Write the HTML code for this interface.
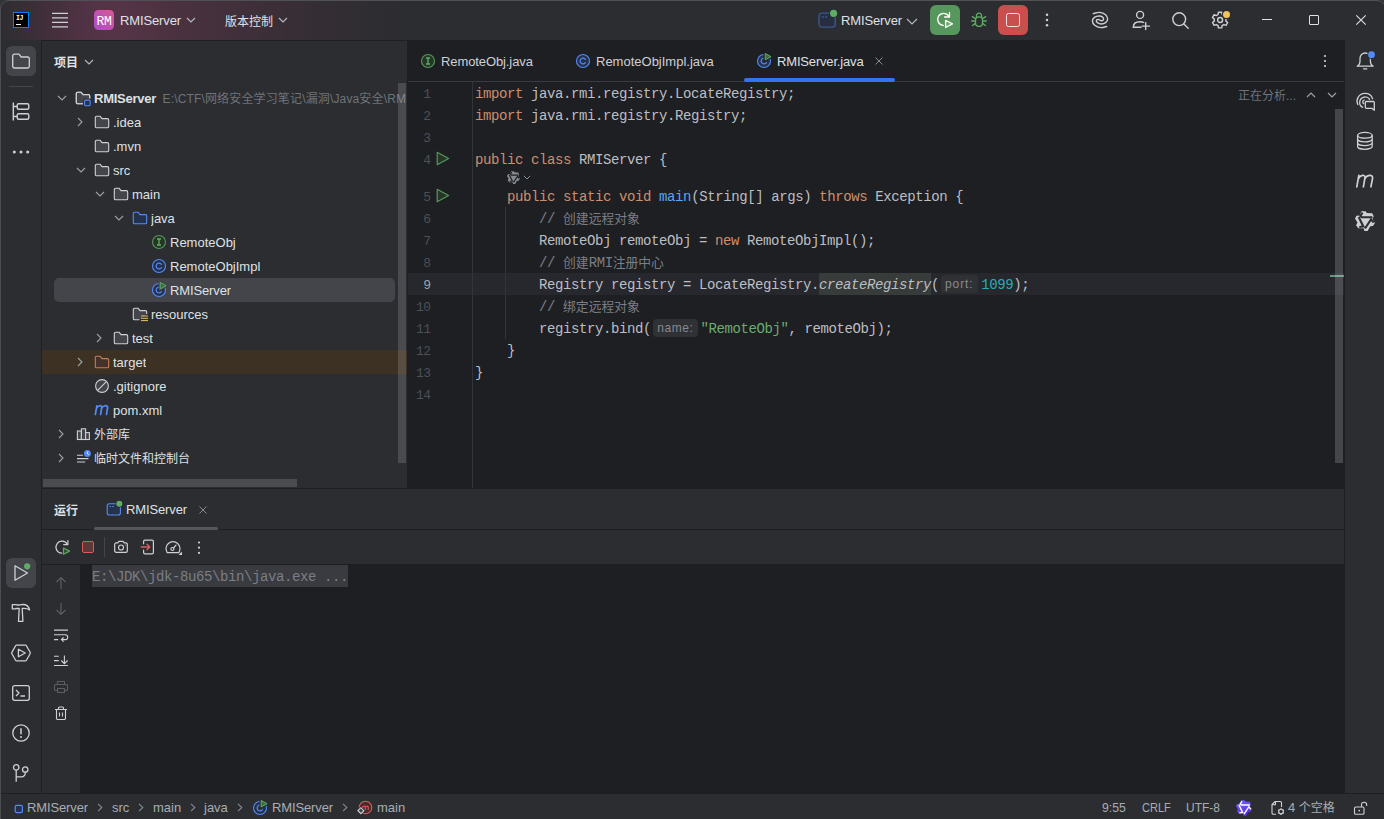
<!DOCTYPE html>
<html lang="zh-CN">
<head>
<meta charset="utf-8">
<title>RMIServer</title>
<style>
*{box-sizing:border-box;margin:0;padding:0}
html,body{width:1384px;height:819px;overflow:hidden;background:#2b2d30}
body{position:relative;font-family:"Liberation Sans","Noto Sans CJK SC",sans-serif;font-size:13px;color:#dfe1e5;-webkit-font-smoothing:antialiased}
.abs{position:absolute}
svg{position:absolute;overflow:visible}
.t{position:absolute;white-space:nowrap;line-height:20px;height:20px;margin-top:1px}
/* title bar */
#title{left:0;top:0;width:1384px;height:40px;background:#2b2d30}
#titleglow{left:0;top:0;width:460px;height:40px;background:linear-gradient(90deg,#2e2d32 0px,#3a2e37 30px,#47303e 60px,#523346 90px,#563447 110px,#523345 140px,#4a313f 180px,#44303c 220px,#3a2e37 280px,#322d33 340px,#2c2d31 400px,#2b2d30 460px)}
/* panels */
#lstrip{left:0;top:40px;width:42px;height:754px;background:#2b2d30;border-right:1px solid #1e1f22}
#rstrip{left:1344px;top:40px;width:40px;height:754px;background:#2b2d30;border-left:1px solid #1e1f22}
#proj{left:42px;top:41px;width:365px;height:447px;background:#2b2d30}
#editor{left:408px;top:41px;width:936px;height:447px;background:#1e1f22}
#hsplit{left:42px;top:488px;width:1302px;height:1px;background:#1e1f22}
#vsplit{left:407px;top:41px;width:1px;height:447px;background:#1e1f22}
#topline{left:0;top:40px;width:1384px;height:1px;background:#1e1f22}
#run{left:42px;top:489px;width:1302px;height:305px;background:#2b2d30}
#console{left:80px;top:565px;width:1264px;height:229px;background:#1e1f22}
#status{left:0;top:793px;width:1384px;height:26px;background:#2b2d30;border-top:1px solid #1e1f22}
.row{position:absolute;left:42px;width:365px;height:24px}
.tree{font-size:13px;color:#dfe1e5}
.code{position:absolute;white-space:pre;font-family:"Liberation Mono","Noto Sans CJK SC",monospace;font-size:14px;letter-spacing:-0.401px;line-height:22px;height:22px;color:#bcbec4;left:475px;margin-top:1px}
.ln{position:absolute;white-space:pre;font-family:"Liberation Mono",monospace;font-size:13px;letter-spacing:-0.600px;margin-top:2px;line-height:22px;height:22px;color:#4b5059;width:30px;text-align:right;left:400.500px}
.k{color:#cf8e6d}.s{color:#6aab73}.n{color:#2aacb8}.m{color:#56a8f5}.c{color:#7a7e85}
.cj{font-size:12.800px;letter-spacing:0}
.hint{display:inline-block;text-align:center;padding:0;font-family:"Liberation Sans",sans-serif;font-size:12px;color:#868a91;background:#2f3135;border-radius:4px;height:18px;line-height:18px;vertical-align:middle;position:relative;top:-1.500px;letter-spacing:0.600px}
</style>
</head>
<body>
<div id="title" class="abs"></div>
<div id="titleglow" class="abs"></div>
<div id="topline" class="abs"></div>
<div id="lstrip" class="abs"></div>
<div id="rstrip" class="abs"></div>
<div id="proj" class="abs"></div>
<div id="editor" class="abs"></div>
<div id="vsplit" class="abs"></div>
<div id="hsplit" class="abs"></div>
<div id="run" class="abs"></div>
<div id="console" class="abs"></div>
<div id="status" class="abs"></div>


<!-- title bar left -->
<div class="abs" style="left:13px;top:12px;width:16px;height:16px;background:#000;border:1px solid #0a7cf5"></div>
<div class="t" style="left:16px;top:14px;font-family:'Liberation Mono',monospace;font-weight:bold;font-size:6.5px;line-height:8px;height:8px;color:#fff;letter-spacing:-0.3px">IJ</div>
<div class="abs" style="left:16px;top:23.5px;width:5px;height:1.2px;background:#fff"></div>
<svg style="left:52px;top:12px" width="16" height="16" viewBox="0 0 16 16"><path d="M0 1.3H16M0 5.8H16M0 10.3H16M0 14.8H16" stroke="#ced0d6" stroke-width="1.3" fill="none"/></svg>
<div class="abs" style="left:94px;top:10px;width:20px;height:20px;border-radius:4.5px;background:linear-gradient(45deg,#a94fc9 0%,#c450b0 50%,#dc5895 100%)"></div>
<div class="t" style="left:94px;top:11px;width:20px;text-align:center;font-family:'Liberation Mono',monospace;font-size:13px;color:#fff;letter-spacing:-0.300px">RM</div>
<div class="t" style="left:120px;top:10px;;letter-spacing:-0.130px">RMIServer</div>
<svg style="left:186px;top:17px" width="10" height="6" viewBox="0 0 10 6"><path d="M1 1L5 5L9 1" stroke="#b4b8bf" stroke-width="1.2" fill="none"/></svg>
<div class="t" style="left:225px;top:10.600px;font-size:12px">版本控制</div>
<svg style="left:278px;top:17px" width="10" height="6" viewBox="0 0 10 6"><path d="M1 1L5 5L9 1" stroke="#b4b8bf" stroke-width="1.2" fill="none"/></svg>

<!-- title bar right -->
<svg style="left:818px;top:12px" width="18" height="16" viewBox="0 0 18 16"><rect x="1" y="1.100" width="16.200" height="14" rx="2.800" fill="#262e40" stroke="#3a5690" stroke-width="1.400"/><path d="M3.800 5H5.800M7.200 5H9.200" stroke="#3a5690" stroke-width="1.300"/><circle cx="15.600" cy="1.300" r="4.400" fill="#2b2d30"/><circle cx="15.600" cy="1.300" r="3.600" fill="#5fad65"/></svg>
<div class="t" style="left:841px;top:10px;;letter-spacing:-0.130px">RMIServer</div>
<svg style="left:906px;top:17.5px" width="12" height="7" viewBox="0 0 12 7"><path d="M1 1L6 6L11 1" stroke="#b4b8bf" stroke-width="1.2" fill="none"/></svg>
<div class="abs" style="left:930px;top:5px;width:30px;height:30px;border-radius:6px;background:#57965c"></div>
<svg style="left:930px;top:5px" width="30" height="30" viewBox="0 0 30 30" fill="none" stroke="#fff" stroke-width="1.300" stroke-linecap="round" stroke-linejoin="round"><path d="M18.800 11.200A6 6 0 1 0 13.300 20.300"/><path d="M19.500 7.500V12H14.600"/><path d="M15.600 15.300L22.400 18.900L15.600 22.500Z" fill="#6aa86f"/></svg>
<svg style="left:971px;top:12px" width="16" height="16" viewBox="0 0 16 16" fill="none" stroke="#5fad65" stroke-width="1.300" stroke-linecap="round"><rect x="4.500" y="4.900" width="7" height="9.500" rx="3.400"/><path d="M5.300 5.200A2.700 4 0 0 1 10.700 5.200M4.400 6.800L1.300 4.600M4.400 9H0.700M4.400 11.400L1.500 13.500M11.600 6.800L14.700 4.600M11.600 9H15.300M11.600 11.400L14.500 13.500"/></svg>
<div class="abs" style="left:998px;top:5px;width:30px;height:30px;border-radius:6px;background:#c94f4f"></div>
<div class="abs" style="left:1006px;top:13px;width:14px;height:14px;border-radius:2.500px;border:1.300px solid #eedfe0;background:#c94f4f"></div>
<svg style="left:1045px;top:12px" width="4" height="16" viewBox="0 0 4 16" fill="#ced0d6"><circle cx="2" cy="2.700" r="1.250"/><circle cx="2" cy="8" r="1.250"/><circle cx="2" cy="13.300" r="1.250"/></svg>
<svg style="left:1092px;top:12px" width="16" height="16" viewBox="0 0 16 16" fill="none" stroke="#ced0d6" stroke-width="1.400" stroke-linecap="round"><path d="M1.27 1.57C2.34 1.38 5.67 0.20 7.72 0.40C9.77 0.60 12.26 1.62 13.58 2.74C14.90 3.86 15.63 5.82 15.63 7.14C15.63 8.46 14.65 9.85 13.58 10.65C12.51 11.46 10.56 11.97 9.19 11.97C7.82 11.97 6.19 11.21 5.38 10.65C4.57 10.09 4.25 9.14 4.35 8.60C4.45 8.06 5.42 7.53 5.96 7.43C6.50 7.33 7.16 7.80 7.60 8.00C8.04 8.20 8.14 8.50 8.60 8.60C9.06 8.70 9.87 8.84 10.36 8.60C10.85 8.36 11.48 7.73 11.53 7.14C11.58 6.55 11.38 5.59 10.65 5.08C9.92 4.57 8.51 4.01 7.14 4.06C5.77 4.11 3.57 4.57 2.45 5.38C1.33 6.19 0.35 7.57 0.40 8.89C0.45 10.21 1.37 12.17 2.74 13.29C4.11 14.41 6.60 15.44 8.60 15.63C10.60 15.83 13.72 14.66 14.75 14.46"/></svg>
<svg style="left:1132px;top:10px" width="18" height="20" viewBox="0 0 18 20" fill="none" stroke="#ced0d6" stroke-width="1.400" stroke-linecap="round"><circle cx="8.100" cy="4.900" r="3.500"/><path d="M9 17.300H1.300C1.300 13.600 4.200 11.700 7.800 11.700C9.200 11.700 10.600 11.900 11.700 12.500M13.700 12.800V19.600M10.100 16.100H17.500"/></svg>
<svg style="left:1172px;top:12px" width="18" height="18" viewBox="0 0 18 18" fill="none" stroke="#ced0d6" stroke-width="1.400" stroke-linecap="round"><circle cx="7.200" cy="7.200" r="6.400"/><path d="M11.900 11.900L16.200 16.200"/></svg>
<svg style="left:1212px;top:12px" width="16" height="16" viewBox="0 0 16 16" fill="none" stroke="#ced0d6" stroke-width="1.400" stroke-linejoin="round"><circle cx="8.100" cy="8.050" r="2.500"/><path d="M6.10 2.50L6.44 0.22L9.76 0.22L10.10 2.50L11.91 3.54L14.05 2.70L15.71 5.58L13.91 7.01L13.91 9.09L15.71 10.52L14.05 13.40L11.91 12.56L10.10 13.60L9.76 15.88L6.44 15.88L6.10 13.60L4.29 12.56L2.15 13.40L0.49 10.52L2.29 9.09L2.29 7.01L0.49 5.58L2.15 2.70L4.29 3.54Z"/></svg>
<div class="abs" style="left:1222px;top:9.500px;width:9px;height:9px;border-radius:50%;background:#2b2d30"></div>
<div class="abs" style="left:1223px;top:10.500px;width:7px;height:7px;border-radius:50%;background:#f2c55c"></div>
<div class="abs" style="left:1262px;top:19px;width:10px;height:1px;background:#dfe1e5"></div>
<div class="abs" style="left:1309px;top:15px;width:10px;height:10px;border:1px solid #dfe1e5;border-radius:1px"></div>
<svg style="left:1356px;top:15px" width="10" height="10" viewBox="0 0 10 10"><path d="M0.300 .3L9.700 9.700M9.700 .3L.3 9.700" stroke="#dfe1e5" stroke-width="1.100"/></svg>

<div class="abs" style="left:6px;top:558px;width:30px;height:30px;border-radius:6px;background:#43454a"></div>
<svg style="left:11px;top:563px" width="20" height="20" viewBox="0 0 20 20" fill="none" stroke="#ced0d6" stroke-width="1.300" stroke-linejoin="round"><path d="M4 2.800L16.500 10L4 17.200Z"/><circle cx="16.200" cy="3.300" r="4" fill="#43454a" stroke="none"/><circle cx="16.200" cy="3.300" r="3.100" fill="#5fad65" stroke="none"/></svg>
<svg style="left:11px;top:603px" width="20" height="20" viewBox="0 0 20 20" fill="none" stroke="#ced0d6" stroke-width="1.300" stroke-linejoin="round"><path d="M1.300 1.700H5C7 2.600 9 1.500 12 1.500C15.600 1.500 17.800 3.600 18.600 6.900C16.600 5.300 14.600 5.100 11.200 5.400L11.900 18.400H7.500L8.200 5.500H5L4.400 5.900H1.300Z"/></svg>
<svg style="left:11px;top:643px" width="20" height="20" viewBox="0 0 20 20" fill="none" stroke="#ced0d6" stroke-width="1.300" stroke-linejoin="round"><path d="M5.600 2.200H14.400A1.200 1.200 0 0 1 15.400 2.800L19.100 9.300A1.400 1.400 0 0 1 19.100 10.700L15.400 17.200A1.200 1.200 0 0 1 14.400 17.800H5.600A1.200 1.200 0 0 1 4.600 17.200L0.900 10.700A1.400 1.400 0 0 1 .9 9.300L4.600 2.800A1.200 1.200 0 0 1 5.600 2.200Z"/><path d="M7.400 6.200L14.300 10L7.400 13.800Z"/></svg>
<svg style="left:11px;top:683px" width="20" height="20" viewBox="0 0 20 20" fill="none" stroke="#ced0d6" stroke-width="1.300" stroke-linejoin="round"><rect x="1.700" y="2.700" width="16.600" height="14.600" rx="2"/><path d="M5 7L8 10L5 13M9.500 13H14"/></svg>
<svg style="left:11px;top:723px" width="20" height="20" viewBox="0 0 20 20" fill="none" stroke="#ced0d6" stroke-width="1.300"><circle cx="10" cy="10" r="8.200"/><path d="M10 5.200V11.200" stroke-width="1.500"/><circle cx="10" cy="14" r="1" fill="#ced0d6" stroke="none"/></svg>
<svg style="left:11px;top:763px" width="20" height="20" viewBox="0 0 20 20" fill="none" stroke="#ced0d6" stroke-width="1.300"><circle cx="5.200" cy="4.400" r="2.700"/><circle cx="14.200" cy="6.500" r="2.700"/><path d="M5.200 7.100V18.800M14.200 9.200V10.200A3.600 3.600 0 0 1 10.600 13.800H5.200"/></svg>
<div class="abs" style="left:0;top:0;width:1384px;height:1px;background:#505155"></div>
<div class="abs" style="left:0;top:0;width:1px;height:819px;background:#4c4d51"></div>
<svg style="left:0;top:0" width="9" height="9" viewBox="0 0 9 9"><path d="M0 0H9V0.500A8.500 8.500 0 0 0 .5 9H0Z" fill="#313236"/><path d="M9 .5A8.500 8.500 0 0 0 .5 9" fill="none" stroke="#4e4f53" stroke-width="1"/></svg>
<svg style="left:1378px;top:0" width="6" height="6" viewBox="0 0 6 6"><path d="M0 0H6V6A8 8 0 0 0 0 .5Z" fill="#313236"/><path d="M0 .5A8 8 0 0 1 6 4.500" fill="none" stroke="#4e4f53" stroke-width="1"/></svg>
<div class="abs" style="left:6px;top:46px;width:30px;height:30px;border-radius:6px;background:#43454a"></div>
<svg style="left:11px;top:51px" width="20" height="20" viewBox="0 0 20 20"><path d="M1.700 5A1.800 1.800 0 0 1 3.500 3.200H8L10.200 6H16.500A1.800 1.800 0 0 1 18.300 7.800V15.200A1.800 1.800 0 0 1 16.500 17H3.500A1.800 1.800 0 0 1 1.700 15.200Z" fill="none" stroke="#ced0d6" stroke-width="1.300" stroke-linejoin="round"/></svg>
<div class="abs" style="left:9px;top:86px;width:24px;height:1px;background:#43454a"></div>
<svg style="left:11px;top:102px" width="20" height="20" viewBox="0 0 20 20" fill="none" stroke="#ced0d6" stroke-width="1.400"><path d="M2.300 0.500V18.500M2.300 4.500H6M2.300 14.500H6"/><rect x="6.200" y="1.700" width="11.600" height="5.600" rx="1.500"/><rect x="6.200" y="11.700" width="11.600" height="5.600" rx="1.500"/></svg>
<svg style="left:12px;top:150px" width="18" height="4" viewBox="0 0 18 4" fill="#ced0d6"><circle cx="2.300" cy="2" r="1.500"/><circle cx="9" cy="2" r="1.500"/><circle cx="15.700" cy="2" r="1.500"/></svg>
<div class="t" style="left:54px;top:51.600px;font-size:12px;font-weight:bold;color:#dfe1e5">项目</div>
<svg style="left:84px;top:59px" width="10" height="6" viewBox="0 0 10 6"><path d="M1 1L5 5L9 1" stroke="#b4b8bf" stroke-width="1.100" fill="none"/></svg>
<svg style="left:57px;top:95px" width="10" height="6" viewBox="0 0 10 6"><path d="M1 1L5 5L9 1" stroke="#9da0a8" stroke-width="1.100" fill="none"/></svg><svg style="left:75px;top:90px" width="16" height="16" viewBox="0 0 16 16"><path d="M1.300 3.600A1.300 1.300 0 0 1 2.600 2.300H6.200L8 4.600H13.400A1.300 1.300 0 0 1 14.700 5.900V8.500M8 13.700H2.600A1.300 1.300 0 0 1 1.300 12.400V3.600" fill="#43454a" stroke="#ced0d6" stroke-width="1.100" stroke-linejoin="round"/><path d="M1.800 3.500H6L8 5.200H14.200V13.200H1.800Z" fill="#43454a"/><path d="M1.300 3.600A1.300 1.300 0 0 1 2.600 2.300H6.200L8 4.600H13.400A1.300 1.300 0 0 1 14.700 5.900V8.500M8 13.700H2.600A1.300 1.300 0 0 1 1.300 12.400V3.600" fill="none" stroke="#ced0d6" stroke-width="1.100" stroke-linejoin="round"/><rect x="8.200" y="8.800" width="8" height="8" rx="2.200" fill="#2b2d30"/><rect x="9.600" y="10.100" width="5.600" height="5.600" rx="1.300" fill="#25324d" stroke="#548af7" stroke-width="1.100"/></svg><div class="t tree" style="left:94px;top:88px;max-width:312px;overflow:hidden;font-weight:bold;letter-spacing:-0.250px;">RMIServer<span style="font-weight:normal;color:#6f737a;margin-left:6.500px;font-size:12px;letter-spacing:0.150px">E:\CTF\网络安全学习笔记\漏洞\Java安全\RM</span></div>
<svg style="left:77px;top:117px" width="6" height="10" viewBox="0 0 6 10"><path d="M1 1L5 5L1 9" stroke="#9da0a8" stroke-width="1.100" fill="none"/></svg><svg style="left:94px;top:114px" width="16" height="16" viewBox="0 0 16 16"><path d="M1.300 3.600A1.300 1.300 0 0 1 2.600 2.300H6.200L8 4.600H13.400A1.300 1.300 0 0 1 14.700 5.900V12.400A1.300 1.300 0 0 1 13.400 13.700H2.600A1.300 1.300 0 0 1 1.300 12.400Z" fill="#43454a" stroke="#ced0d6" stroke-width="1.100" stroke-linejoin="round"/></svg><div class="t tree" style="left:113px;top:112px;max-width:293px;overflow:hidden;">.idea</div>
<svg style="left:94px;top:138px" width="16" height="16" viewBox="0 0 16 16"><path d="M1.300 3.600A1.300 1.300 0 0 1 2.600 2.300H6.200L8 4.600H13.400A1.300 1.300 0 0 1 14.700 5.900V12.400A1.300 1.300 0 0 1 13.400 13.700H2.600A1.300 1.300 0 0 1 1.300 12.400Z" fill="#43454a" stroke="#ced0d6" stroke-width="1.100" stroke-linejoin="round"/></svg><div class="t tree" style="left:113px;top:136px;max-width:293px;overflow:hidden;">.mvn</div>
<svg style="left:76px;top:167px" width="10" height="6" viewBox="0 0 10 6"><path d="M1 1L5 5L9 1" stroke="#9da0a8" stroke-width="1.100" fill="none"/></svg><svg style="left:94px;top:162px" width="16" height="16" viewBox="0 0 16 16"><path d="M1.300 3.600A1.300 1.300 0 0 1 2.600 2.300H6.200L8 4.600H13.400A1.300 1.300 0 0 1 14.700 5.900V12.400A1.300 1.300 0 0 1 13.400 13.700H2.600A1.300 1.300 0 0 1 1.300 12.400Z" fill="#43454a" stroke="#ced0d6" stroke-width="1.100" stroke-linejoin="round"/></svg><div class="t tree" style="left:113px;top:160px;max-width:293px;overflow:hidden;">src</div>
<svg style="left:95px;top:191px" width="10" height="6" viewBox="0 0 10 6"><path d="M1 1L5 5L9 1" stroke="#9da0a8" stroke-width="1.100" fill="none"/></svg><svg style="left:113px;top:186px" width="16" height="16" viewBox="0 0 16 16"><path d="M1.300 3.600A1.300 1.300 0 0 1 2.600 2.300H6.200L8 4.600H13.400A1.300 1.300 0 0 1 14.700 5.900V12.400A1.300 1.300 0 0 1 13.400 13.700H2.600A1.300 1.300 0 0 1 1.300 12.400Z" fill="#43454a" stroke="#ced0d6" stroke-width="1.100" stroke-linejoin="round"/></svg><div class="t tree" style="left:132px;top:184px;max-width:274px;overflow:hidden;">main</div>
<svg style="left:114px;top:215px" width="10" height="6" viewBox="0 0 10 6"><path d="M1 1L5 5L9 1" stroke="#9da0a8" stroke-width="1.100" fill="none"/></svg><svg style="left:132px;top:210px" width="16" height="16" viewBox="0 0 16 16"><path d="M1.300 3.600A1.300 1.300 0 0 1 2.600 2.300H6.200L8 4.600H13.400A1.300 1.300 0 0 1 14.700 5.900V12.400A1.300 1.300 0 0 1 13.400 13.700H2.600A1.300 1.300 0 0 1 1.300 12.400Z" fill="#25324d" stroke="#548af7" stroke-width="1.100" stroke-linejoin="round"/></svg><div class="t tree" style="left:151px;top:208px;max-width:255px;overflow:hidden;">java</div>
<svg style="left:151px;top:234px" width="16" height="16" viewBox="0 0 16 16"><circle cx="8" cy="8" r="6.500" fill="#253627" stroke="#57965c" stroke-width="1.100"/><path d="M6 5H10M6 11H10M8 5V11" stroke="#5fad65" stroke-width="1.300" fill="none"/></svg><div class="t tree" style="left:170px;top:232px;max-width:236px;overflow:hidden;">RemoteObj</div>
<svg style="left:151px;top:258px" width="16" height="16" viewBox="0 0 16 16"><circle cx="8" cy="8" r="6.500" fill="#25324d" stroke="#548af7" stroke-width="1.100"/><path d="M10.400 6.300A2.900 2.900 0 1 0 10.400 9.700" stroke="#548af7" stroke-width="1.200" fill="none" stroke-linecap="round"/></svg><div class="t tree" style="left:170px;top:256px;max-width:236px;overflow:hidden;">RemoteObjImpl</div>
<div class="abs" style="left:54px;top:278px;width:341px;height:24px;border-radius:5px;background:#43454a"></div><svg style="left:151px;top:282px" width="16" height="16" viewBox="0 0 16 16"><circle cx="8" cy="8" r="6.500" fill="#25324d" stroke="#548af7" stroke-width="1.100"/><path d="M10.400 6.300A2.900 2.900 0 1 0 10.400 9.700" stroke="#548af7" stroke-width="1.200" fill="none" stroke-linecap="round"/><path d="M8.300 -0.600L16.500 3.700L8.300 8Z" fill="#43454a" stroke="#43454a" stroke-width="1.600" stroke-linejoin="round"/><path d="M9.200 .5L15.100 3.700L9.200 6.900Z" fill="#3c6b41" stroke="#5fad65" stroke-width="1" stroke-linejoin="round"/></svg><div class="t tree" style="left:170px;top:280px;max-width:236px;overflow:hidden;;letter-spacing:-0.130px">RMIServer</div>
<svg style="left:132px;top:306px" width="16" height="16" viewBox="0 0 16 16"><path d="M7.500 13.700H2.600A1.300 1.300 0 0 1 1.300 12.400V3.600A1.300 1.300 0 0 1 2.600 2.300H6.200L8 4.600H13.400A1.300 1.300 0 0 1 14.700 5.900V8" fill="#43454a" stroke="#ced0d6" stroke-width="1.100" stroke-linejoin="round"/><path d="M9 10H16M9 12.300H16M9 14.600H16" stroke="#f2c55c" stroke-width="1"/></svg><div class="t tree" style="left:151px;top:304px;max-width:255px;overflow:hidden;">resources</div>
<svg style="left:96px;top:333px" width="6" height="10" viewBox="0 0 6 10"><path d="M1 1L5 5L1 9" stroke="#9da0a8" stroke-width="1.100" fill="none"/></svg><svg style="left:113px;top:330px" width="16" height="16" viewBox="0 0 16 16"><path d="M1.300 3.600A1.300 1.300 0 0 1 2.600 2.300H6.200L8 4.600H13.400A1.300 1.300 0 0 1 14.700 5.900V12.400A1.300 1.300 0 0 1 13.400 13.700H2.600A1.300 1.300 0 0 1 1.300 12.400Z" fill="#43454a" stroke="#ced0d6" stroke-width="1.100" stroke-linejoin="round"/></svg><div class="t tree" style="left:132px;top:328px;max-width:274px;overflow:hidden;">test</div>
<div class="abs" style="left:42px;top:350px;width:365px;height:24px;background:#3d3124"></div><svg style="left:77px;top:357px" width="6" height="10" viewBox="0 0 6 10"><path d="M1 1L5 5L1 9" stroke="#9da0a8" stroke-width="1.100" fill="none"/></svg><svg style="left:94px;top:354px" width="16" height="16" viewBox="0 0 16 16"><path d="M1.300 3.600A1.300 1.300 0 0 1 2.600 2.300H6.200L8 4.600H13.400A1.300 1.300 0 0 1 14.700 5.900V12.400A1.300 1.300 0 0 1 13.400 13.700H2.600A1.300 1.300 0 0 1 1.300 12.400Z" fill="#45322b" stroke="#c77d55" stroke-width="1.100" stroke-linejoin="round"/></svg><div class="t tree" style="left:113px;top:352px;max-width:293px;overflow:hidden;">target</div>
<svg style="left:94px;top:378px" width="16" height="16" viewBox="0 0 16 16"><circle cx="8" cy="8" r="6.400" fill="#43454a" stroke="#ced0d6" stroke-width="1.100"/><path d="M3.600 12.400L12.400 3.600" stroke="#ced0d6" stroke-width="1.100"/></svg><div class="t tree" style="left:113px;top:376px;max-width:293px;overflow:hidden;">.gitignore</div>
<svg style="left:94px;top:402px" width="16" height="16" viewBox="0 0 16 16" fill="none" stroke="#548af7" stroke-width="1.700" stroke-linecap="round"><path d="M2.900 3.800L1.300 12.500M2.400 6.600C4 3.400 7.800 2.600 7.800 5.400L6.600 12.500M7.400 6.600C9 3.400 13.600 2.400 13.600 5.800C13.600 7.200 12.600 10.300 12.500 12.500"/></svg><div class="t tree" style="left:113px;top:400px;max-width:293px;overflow:hidden;">pom.xml</div>
<svg style="left:58px;top:429px" width="6" height="10" viewBox="0 0 6 10"><path d="M1 1L5 5L1 9" stroke="#9da0a8" stroke-width="1.100" fill="none"/></svg><svg style="left:75px;top:426px" width="16" height="16" viewBox="0 0 16 16" fill="#43454a" stroke="#ced0d6" stroke-width="1.100"><rect x="2.400" y="5" width="4" height="8.500"/><rect x="6.400" y="2.800" width="4.200" height="10.700"/><rect x="10.600" y="6.600" width="3.800" height="6.900"/></svg><div class="t tree" style="left:94px;top:424px;max-width:312px;overflow:hidden;font-size:12px;">外部库</div>
<svg style="left:58px;top:453px" width="6" height="10" viewBox="0 0 6 10"><path d="M1 1L5 5L1 9" stroke="#9da0a8" stroke-width="1.100" fill="none"/></svg><svg style="left:75px;top:450px" width="16" height="16" viewBox="0 0 16 16" fill="none"><path d="M2 5.200H8M2 8.600H13.500M2 12H10.200" stroke="#ced0d6" stroke-width="1.100"/><circle cx="12.400" cy="3.500" r="4.300" fill="#2b2d30"/><circle cx="12.400" cy="3.500" r="3.500" fill="#548af7"/><path d="M12.400 1.600V3.700L13.800 4.500" stroke="#fff" stroke-width="0.900"/></svg><div class="t tree" style="left:94px;top:448px;max-width:312px;overflow:hidden;font-size:12px;">临时文件和控制台</div>
<div class="abs" style="left:398px;top:83px;width:8px;height:380px;background:rgba(255,255,255,0.145)"></div>
<div class="abs" style="left:43px;top:479px;width:254px;height:8px;background:#4a4c50"></div>
<div class="abs" style="left:408px;top:81px;width:936px;height:1px;background:#393b40"></div>
<svg style="left:420px;top:53px" width="16" height="16" viewBox="0 0 16 16"><circle cx="8" cy="8" r="6.500" fill="#253627" stroke="#57965c" stroke-width="1.100"/><path d="M6 5H10M6 11H10M8 5V11" stroke="#5fad65" stroke-width="1.300" fill="none"/></svg>
<div class="t" style="left:441px;top:51px;color:#ced0d6;letter-spacing:-0.100px">RemoteObj.java</div>
<svg style="left:575px;top:53px" width="16" height="16" viewBox="0 0 16 16"><circle cx="8" cy="8" r="6.500" fill="#25324d" stroke="#548af7" stroke-width="1.100"/><path d="M10.400 6.300A2.900 2.900 0 1 0 10.400 9.700" stroke="#548af7" stroke-width="1.200" fill="none" stroke-linecap="round"/></svg>
<div class="t" style="left:596px;top:51px;color:#ced0d6">RemoteObjImpl.java</div>
<svg style="left:756px;top:53px" width="16" height="16" viewBox="0 0 16 16"><circle cx="8" cy="8" r="6.500" fill="#25324d" stroke="#548af7" stroke-width="1.100"/><path d="M10.400 6.300A2.900 2.900 0 1 0 10.400 9.700" stroke="#548af7" stroke-width="1.200" fill="none" stroke-linecap="round"/><path d="M8.300 -0.600L16.500 3.700L8.300 8Z" fill="#1e1f22" stroke="#1e1f22" stroke-width="1.600" stroke-linejoin="round"/><path d="M9.200 .5L15.100 3.700L9.200 6.900Z" fill="#3c6b41" stroke="#5fad65" stroke-width="1" stroke-linejoin="round"/></svg>
<div class="t" style="left:777px;top:51px;color:#dfe1e5;letter-spacing:-0.170px">RMIServer.java</div>
<svg style="left:875px;top:57px" width="8" height="8" viewBox="0 0 8 8"><path d="M0.500 .5L7.500 7.500M7.500 .5L.5 7.500" stroke="#868a91" stroke-width="1"/></svg>
<div class="abs" style="left:744px;top:78px;width:151px;height:4px;border-radius:2px;background:#3574f0"></div>
<svg style="left:1323px;top:54px" width="4" height="14" viewBox="0 0 4 14" fill="#ced0d6"><circle cx="2" cy="2" r="1.100"/><circle cx="2" cy="7" r="1.100"/><circle cx="2" cy="12" r="1.100"/></svg>
<div class="abs" style="left:472px;top:82px;width:1px;height:406px;background:#313438"></div>
<div class="abs" style="left:408px;top:273px;width:936px;height:22px;background:#26282e"></div>
<div class="abs" style="left:472px;top:273px;width:1px;height:22px;background:#313438"></div>
<div class="abs" style="left:505px;top:207px;width:1px;height:132px;background:#313438"></div>
<div class="abs" style="left:819px;top:273px;width:112px;height:22px;background:#373b39"></div>
<div class="ln" style="top:82px;color:#4b5059">1</div>
<div class="ln" style="top:104px;color:#4b5059">2</div>
<div class="ln" style="top:126px;color:#4b5059">3</div>
<div class="ln" style="top:148px;color:#4b5059">4</div>
<div class="ln" style="top:185px;color:#4b5059">5</div>
<div class="ln" style="top:207px;color:#4b5059">6</div>
<div class="ln" style="top:229px;color:#4b5059">7</div>
<div class="ln" style="top:251px;color:#4b5059">8</div>
<div class="ln" style="top:273px;color:#a1a3ab">9</div>
<div class="ln" style="top:295px;color:#4b5059">10</div>
<div class="ln" style="top:317px;color:#4b5059">11</div>
<div class="ln" style="top:339px;color:#4b5059">12</div>
<div class="ln" style="top:361px;color:#4b5059">13</div>
<div class="ln" style="top:383px;color:#4b5059">14</div>
<svg style="left:436px;top:151px" width="14" height="15" viewBox="0 0 14 15"><path d="M1.200 1.300L12.600 7.500L1.200 13.700Z" fill="#253627" stroke="#57965c" stroke-width="1.200" stroke-linejoin="round"/></svg>
<svg style="left:436px;top:188px" width="14" height="15" viewBox="0 0 14 15"><path d="M1.200 1.300L12.600 7.500L1.200 13.700Z" fill="#253627" stroke="#57965c" stroke-width="1.200" stroke-linejoin="round"/></svg>
<div class="code" style="top:82px"><span class="k">import</span> java.rmi.registry.LocateRegistry;</div>
<div class="code" style="top:104px"><span class="k">import</span> java.rmi.registry.Registry;</div>
<div class="code" style="top:148px"><span class="k">public</span> <span class="k">class</span> RMIServer {</div>
<div class="code" style="top:185px">    <span class="k">public</span> <span class="k">static</span> <span class="k">void</span> <span class="m">main</span>(String[] args) <span class="k">throws</span> Exception {</div>
<div class="code" style="top:207px">        <span class="c">// <span class="cj">创建远程对象</span></span></div>
<div class="code" style="top:229px">        RemoteObj remoteObj = <span class="k">new</span> RemoteObjImpl();</div>
<div class="code" style="top:251px">        <span class="c">// <span class="cj">创建</span>RMI<span class="cj">注册中心</span></span></div>
<div class="code" style="top:273px">        Registry registry = LocateRegistry.<i>createRegistry</i>(<span class="hint" style="margin-left:1.500px;width:37.500px;margin-right:3.200px;letter-spacing:0.900px">port:</span><span class="n">1099</span>);</div>
<div class="code" style="top:295px">        <span class="c">// <span class="cj">绑定远程对象</span></span></div>
<div class="code" style="top:317px">        registry.bind(<span class="hint" style="margin-left:2.200px;width:44.300px;margin-right:3.100px">name:</span><span class="s">"RemoteObj"</span>, remoteObj);</div>
<div class="code" style="top:339px">    }</div>
<div class="code" style="top:361px">}</div>
<svg style="left:507px;top:171px" width="13" height="13" viewBox="0 0 20.200 20.200"><path d="M6.400 .2L10.700 .2L11.900 2L17.400 2.200L18.900 5.300L17.600 8L20.100 12L18.100 15.100L15.400 15.500L12.700 20.100H9.500L8.600 17.400H3.300L1.100 14.300L2.500 11.600L0 7.600L1.500 4.900L4.700 4.500Z" fill="#868a91"/><path d="M3.700 6.100L8.400 15.600L4.300 16.100M17.600 6.300H6.800L5.400 4.900L7.600 1.600M18.900 11.600L16.200 8.600L10.100 17.700" fill="none" stroke="#1e1f22" stroke-width="1.8" stroke-linejoin="miter"/></svg>
<svg style="left:523px;top:175px" width="8" height="5" viewBox="0 0 8 5"><path d="M0.800 .8L4 4L7.200 .8" stroke="#868a91" stroke-width="1" fill="none"/></svg>
<div class="t" style="left:1238px;top:85px;font-size:12px;color:#6f737a">正在分析...</div>
<svg style="left:1306px;top:92px" width="10" height="6" viewBox="0 0 10 6"><path d="M1 5L5 1L9 5" stroke="#9da0a8" stroke-width="1.200" fill="none"/></svg>
<svg style="left:1327px;top:92px" width="10" height="6" viewBox="0 0 10 6"><path d="M1 1L5 5L9 1" stroke="#9da0a8" stroke-width="1.200" fill="none"/></svg>
<div class="abs" style="left:1330px;top:275px;width:14px;height:2px;background:#64947e"></div>
<div class="abs" style="left:1335px;top:109px;width:8px;height:354px;background:rgba(255,255,255,0.175)"></div>
<div class="t" style="left:54px;top:499.600px;font-size:12px;font-weight:bold;color:#dfe1e5">运行</div>
<svg style="left:106px;top:502px" width="16" height="14" viewBox="0 0 16 14"><rect x="1.200" y="1.700" width="13.200" height="11.300" rx="2" fill="#25324d" stroke="#548af7" stroke-width="1.100"/><path d="M3.500 4.500H5M6.300 4.500H7.800" stroke="#548af7" stroke-width="1.100"/><circle cx="13.300" cy="1.800" r="3.800" fill="#2b2d30"/><circle cx="13.300" cy="1.800" r="3" fill="#5fad65"/></svg>
<div class="t" style="left:126px;top:499px;letter-spacing:-0.130px">RMIServer</div>
<svg style="left:199px;top:506px" width="8" height="8" viewBox="0 0 8 8"><path d="M0.500 .5L7.500 7.500M7.500 .5L.5 7.500" stroke="#868a91" stroke-width="1"/></svg>
<div class="abs" style="left:42px;top:529px;width:1302px;height:1px;background:#1e1f22"></div>
<div class="abs" style="left:94px;top:527px;width:124px;height:3px;border-radius:1.500px;background:#55575c"></div>
<svg style="left:54px;top:539px" width="18" height="18" viewBox="0 0 18 18" fill="none" stroke-width="1.200" stroke-linecap="round" stroke-linejoin="round"><path d="M13.300 5.400A6 6 0 1 0 7.600 14.200" stroke="#ced0d6"/><path d="M13.900 1.500V5.600H9.700" stroke="#ced0d6"/><path d="M9.500 9L15.500 12.100L9.500 15.200Z" stroke="#5fad65" fill="#2c4a30"/></svg>
<div class="abs" style="left:82px;top:541px;width:12px;height:12px;border-radius:2px;border:1.200px solid #db5c5c;background:#5e3838"></div>
<div class="abs" style="left:104px;top:537px;width:1px;height:20px;background:#43454a"></div>
<svg style="left:113px;top:539px" width="16" height="16" viewBox="0 0 16 16" fill="none" stroke="#ced0d6" stroke-width="1.200" stroke-linejoin="round"><path d="M1.700 5.300A1.400 1.400 0 0 1 3.100 3.900H4.800L5.900 2.400H10.100L11.200 3.900H12.900A1.400 1.400 0 0 1 14.300 5.300V11.900A1.400 1.400 0 0 1 12.900 13.300H3.100A1.400 1.400 0 0 1 1.700 11.900Z"/><circle cx="8" cy="8.500" r="2.500"/><circle cx="12.300" cy="5.900" r="0.500" fill="#ced0d6" stroke="none"/></svg>
<svg style="left:140px;top:539px" width="16" height="16" viewBox="0 0 16 16" fill="none" stroke-width="1.200" stroke-linecap="round" stroke-linejoin="round"><path d="M3.600 4.800V2.600A1.400 1.400 0 0 1 5 1.200H12A1.400 1.400 0 0 1 13.400 2.600V13.400A1.400 1.400 0 0 1 12 14.800H5A1.400 1.400 0 0 1 3.600 13.400V11.200" stroke="#ced0d6"/><path d="M1.200 8H9.600M7 5.200L9.800 8L7 10.800" stroke="#db5c5c" stroke-width="1.300"/></svg>
<svg style="left:164px;top:539px" width="19" height="17" viewBox="0 0 19 17" fill="none" stroke="#ced0d6" stroke-width="1.200" stroke-linecap="round"><path d="M3.200 13.600A7 7 0 1 1 14.800 13.600Z" stroke-linejoin="round"/><circle cx="8.400" cy="10" r="1.500"/><path d="M9.500 9L12 6.200"/><path d="M18 12.500V16H14.500Z" fill="#ced0d6" stroke="none"/></svg>
<svg style="left:197px;top:540.500px" width="4" height="14" viewBox="0 0 4 14" fill="#ced0d6"><circle cx="2" cy="1.500" r="1.100"/><circle cx="2" cy="6.700" r="1.100"/><circle cx="2" cy="11.900" r="1.100"/></svg>
<div class="abs" style="left:42px;top:564px;width:1302px;height:1px;background:#1e1f22"></div>
<div class="abs" style="left:92px;top:565px;width:256px;height:22px;background:#393b40"></div>
<div class="code" style="left:92px;top:565px;color:#7a7e85">E:\JDK\jdk-8u65\bin\java.exe ...</div>
<svg style="left:55px;top:576px" width="12" height="14" viewBox="0 0 12 14" fill="none" stroke="#5a5d63" stroke-width="1.200"><path d="M6 13V1.500M1.500 6L6 1.500L10.500 6"/></svg>
<svg style="left:55px;top:602px" width="12" height="14" viewBox="0 0 12 14" fill="none" stroke="#5a5d63" stroke-width="1.200"><path d="M6 1V12.500M1.500 8L6 12.500L10.500 8"/></svg>
<svg style="left:53px;top:628px" width="16" height="16" viewBox="0 0 16 16" fill="none" stroke="#ced0d6" stroke-width="1.100"><path d="M1 2.100H15M1 6.700H12.300A2.450 2.450 0 0 1 12.300 11.600H8.400M1 11.600H5.200M10.600 9.500L8.400 11.600L10.600 13.700"/></svg>
<svg style="left:53px;top:653px" width="16" height="16" viewBox="0 0 16 16" fill="none" stroke="#ced0d6" stroke-width="1.100"><path d="M1 3.300H5.800M1 7.600H5.800M1 12.500H15M11.400 2.500V10.600M8.200 7.500L11.400 10.700L14.600 7.500"/></svg>
<svg style="left:53px;top:679px" width="16" height="16" viewBox="0 0 16 16" fill="none" stroke="#5a5d63" stroke-width="1.100" stroke-linejoin="round"><path d="M4.500 5.500V2.500H11.500V5.500M4.500 11.500H2.800A1.300 1.300 0 0 1 1.500 10.200V6.800A1.300 1.300 0 0 1 2.800 5.500H13.200A1.300 1.300 0 0 1 14.500 6.800V10.200A1.300 1.300 0 0 1 13.200 11.500H11.500M4.500 9.500H11.500V13.500H4.500Z"/></svg>
<svg style="left:53px;top:705px" width="16" height="16" viewBox="0 0 16 16" fill="none" stroke="#ced0d6" stroke-width="1.100" stroke-linejoin="round"><path d="M2 4.500H14M5.500 4.500V3A1 1 0 0 1 6.500 2H9.500A1 1 0 0 1 10.500 3V4.500M3.500 4.500V13.200A1.300 1.300 0 0 0 4.800 14.500H11.200A1.300 1.300 0 0 0 12.500 13.200V4.500M6.500 7.500V11.500M9.500 7.500V11.500"/></svg>
<svg style="left:1355px;top:51px" width="20" height="20" viewBox="0 0 20 20" fill="none" stroke="#ced0d6" stroke-width="1.300" stroke-linejoin="round"><path d="M2.200 15.200C3.800 14.200 5 12.800 5 10.500V7.200A5.200 5.200 0 0 1 15.400 7.200V10.500C15.400 12.800 16.600 14.200 18.200 15.200Z"/><path d="M8.600 17.900H11.800" stroke-linecap="round"/><circle cx="16.500" cy="3.700" r="4.300" fill="#2b2d30" stroke="none"/><circle cx="16.500" cy="3.700" r="3.400" fill="#548af7" stroke="none"/></svg>
<svg style="left:1355px;top:91px" width="20" height="20" viewBox="0 0 20 20" fill="none" stroke="#ced0d6" stroke-width="1.300" stroke-linecap="round" stroke-linejoin="round"><path d="M2.800 13.500C0.500 9 3.500 2.600 9.800 2.400C13.800 2.300 16.600 4.600 17.600 7.800"/><path d="M7.600 16.300C3.600 14.500 3.600 8.200 8.200 6.400C10.800 5.400 13.600 6.500 14.600 8.400"/><path d="M8.600 12.600C7.200 11.600 7.600 9.600 9.200 9.200"/><path d="M11.300 10.500H18.300A1 1 0 0 1 19.300 11.500V19.300L16.800 17.300H11.300A1 1 0 0 1 10.300 16.300V11.500A1 1 0 0 1 11.300 10.500Z" fill="#2b2d30"/></svg>
<svg style="left:1355px;top:131px" width="20" height="20" viewBox="0 0 20 20" fill="none" stroke="#ced0d6" stroke-width="1.300"><ellipse cx="9.900" cy="4.300" rx="7.300" ry="2.900"/><path d="M2.600 4.300V15.400C2.600 17 5.900 18.300 9.900 18.300C13.900 18.300 17.200 17 17.200 15.400V4.300M2.600 8C2.600 9.600 5.900 10.900 9.900 10.900C13.900 10.900 17.200 9.600 17.200 8M2.600 11.700C2.600 13.300 5.900 14.600 9.900 14.600C13.900 14.600 17.200 13.300 17.200 11.700"/></svg>
<svg style="left:1355px;top:171px" width="20" height="20" viewBox="0 0 20 20" fill="none" stroke="#ced0d6" stroke-width="1.700" stroke-linecap="round"><path d="M3.800 4.400L1.800 15.800M3.200 8C5.200 4 10 3 10 6.400L8.400 15.800M9.600 8C11.600 4 17.600 2.800 17.600 6.800C17.600 8.600 16.200 13 16 15.800"/></svg>
<svg style="left:1355px;top:211px" width="20" height="20" viewBox="0 0 20.200 20.200"><path d="M6.400 .2L10.700 .2L11.900 2L17.400 2.200L18.900 5.300L17.600 8L20.100 12L18.100 15.100L15.400 15.500L12.700 20.100H9.500L8.600 17.400H3.300L1.100 14.300L2.500 11.600L0 7.600L1.500 4.900L4.700 4.500Z" fill="#ced0d6"/><path d="M3.700 6.100L8.400 15.600L4.300 16.100M17.600 6.300H6.800L5.400 4.900L7.600 1.600M18.900 11.600L16.200 8.600L10.100 17.700" fill="none" stroke="#2b2d30" stroke-width="2.1" stroke-linejoin="miter"/></svg>
<svg style="left:14px;top:804px" width="10" height="10" viewBox="0 0 10 10"><rect x="1.200" y="1.400" width="7.200" height="7.200" rx="1.600" fill="#25324d" stroke="#548af7" stroke-width="1.200"/></svg>
<div class="t" style="left:27px;top:797px;color:#a8adb5;letter-spacing:-0.130px">RMIServer</div>
<svg style="left:97px;top:803.300px" width="6" height="9" viewBox="0 0 6 9"><path d="M1 .8L4.800 4.500L1 8.200" stroke="#868a91" stroke-width="1.100" fill="none"/></svg>
<div class="t" style="left:112px;top:797px;color:#a8adb5">src</div>
<svg style="left:138px;top:803.300px" width="6" height="9" viewBox="0 0 6 9"><path d="M1 .8L4.800 4.500L1 8.200" stroke="#868a91" stroke-width="1.100" fill="none"/></svg>
<div class="t" style="left:153px;top:797px;color:#a8adb5">main</div>
<svg style="left:190px;top:803.300px" width="6" height="9" viewBox="0 0 6 9"><path d="M1 .8L4.800 4.500L1 8.200" stroke="#868a91" stroke-width="1.100" fill="none"/></svg>
<div class="t" style="left:204px;top:797px;color:#a8adb5">java</div>
<svg style="left:237px;top:803.300px" width="6" height="9" viewBox="0 0 6 9"><path d="M1 .8L4.800 4.500L1 8.200" stroke="#868a91" stroke-width="1.100" fill="none"/></svg>
<svg style="left:252px;top:800px" width="16" height="16" viewBox="0 0 16 16"><circle cx="8" cy="8" r="6.500" fill="#25324d" stroke="#548af7" stroke-width="1.100"/><path d="M10.400 6.300A2.900 2.900 0 1 0 10.400 9.700" stroke="#548af7" stroke-width="1.200" fill="none" stroke-linecap="round"/><path d="M8.300 -0.600L16.500 3.700L8.300 8Z" fill="#2b2d30" stroke="#2b2d30" stroke-width="1.600" stroke-linejoin="round"/><path d="M9.200 .5L15.100 3.700L9.200 6.900Z" fill="#3c6b41" stroke="#5fad65" stroke-width="1" stroke-linejoin="round"/></svg>
<div class="t" style="left:272px;top:797px;color:#a8adb5;letter-spacing:-0.130px">RMIServer</div>
<svg style="left:342px;top:803.300px" width="6" height="9" viewBox="0 0 6 9"><path d="M1 .8L4.800 4.500L1 8.200" stroke="#868a91" stroke-width="1.100" fill="none"/></svg>
<svg style="left:357px;top:800px" width="16" height="16" viewBox="0 0 16 16"><circle cx="8.500" cy="7.500" r="6.300" fill="#4a2b2b" stroke="#db5c5c" stroke-width="1.100"/><path d="M5.600 10V6.200M5.600 7.200C6.400 5.600 8.300 5.600 8.300 7.200V10M8.300 7.200C9.100 5.600 11.200 5.600 11.200 7.200V10" stroke="#db5c5c" stroke-width="1.100" fill="none"/><path d="M-0.800 10.700L3.900 6L8.600 10.700L3.900 15.400Z" fill="#2b2d30"/><path d="M0.900 10.700L3.900 7.700L6.900 10.700L3.900 13.700Z" fill="#43454a" stroke="#ced0d6" stroke-width="1.100"/></svg>
<div class="t" style="left:377px;top:797px;color:#a8adb5">main</div>
<div class="t" style="left:1102px;top:797px;transform:scaleX(0.940);transform-origin:left;color:#a8adb5">9:55</div>
<div class="t" style="left:1142px;top:797px;transform:scaleX(0.850);transform-origin:left;color:#a8adb5">CRLF</div>
<div class="t" style="left:1186px;top:797px;transform:scaleX(0.920);transform-origin:left;color:#a8adb5">UTF-8</div>
<svg style="left:1236px;top:800px" width="16" height="16" viewBox="0 0 20.200 20.200"><linearGradient id="lg1236" x1="0" y1="0" x2="0.600" y2="1"><stop offset="0" stop-color="#7468ff"/><stop offset="1" stop-color="#5a2de0"/></linearGradient><path d="M6.400 .2L10.700 .2L11.900 2L17.400 2.200L18.900 5.300L17.600 8L20.100 12L18.100 15.100L15.400 15.500L12.700 20.100H9.500L8.600 17.400H3.300L1.100 14.300L2.500 11.600L0 7.600L1.500 4.900L4.700 4.500Z" fill="url(#lg1236)"/><path d="M3.700 6.100L8.400 15.600L4.300 16.100M17.600 6.300H6.800L5.400 4.900L7.600 1.600M18.900 11.600L16.200 8.600L10.100 17.700" fill="none" stroke="#ffffff" stroke-width="1.7" stroke-linejoin="miter"/></svg>
<svg style="left:1270px;top:800px" width="16" height="16" viewBox="0 0 16 16" fill="none" stroke="#ced0d6" stroke-width="1.100" stroke-linejoin="round"><path d="M6 14.300H3.300A1.300 1.300 0 0 1 2 13V4.500L5.200 1.500H10.200A1.300 1.300 0 0 1 11.500 2.800V7M5.500 1.800V4.800H2.300"/><circle cx="11" cy="11.600" r="2.300"/><path d="M11 8.300V9.300M11 13.900V14.900M8.100 10L9 10.500M13 12.700L13.900 13.200M8.100 13.200L9 12.700M13 10.500L13.900 10"/></svg>
<div class="t" style="left:1288px;top:797px;color:#a8adb5">4 <span style="font-size:12px">个空格</span></div>
<svg style="left:1353px;top:800px" width="16" height="16" viewBox="0 0 16 16" fill="none" stroke="#ced0d6" stroke-width="1.100"><rect x="1.500" y="7" width="9.500" height="7.200" rx="1.300"/><path d="M8.500 7V4.800A2.600 2.600 0 0 1 13.700 4.800V6"/><circle cx="6.200" cy="10.600" r="0.900" fill="#ced0d6" stroke="none"/></svg>
</body>
</html>
